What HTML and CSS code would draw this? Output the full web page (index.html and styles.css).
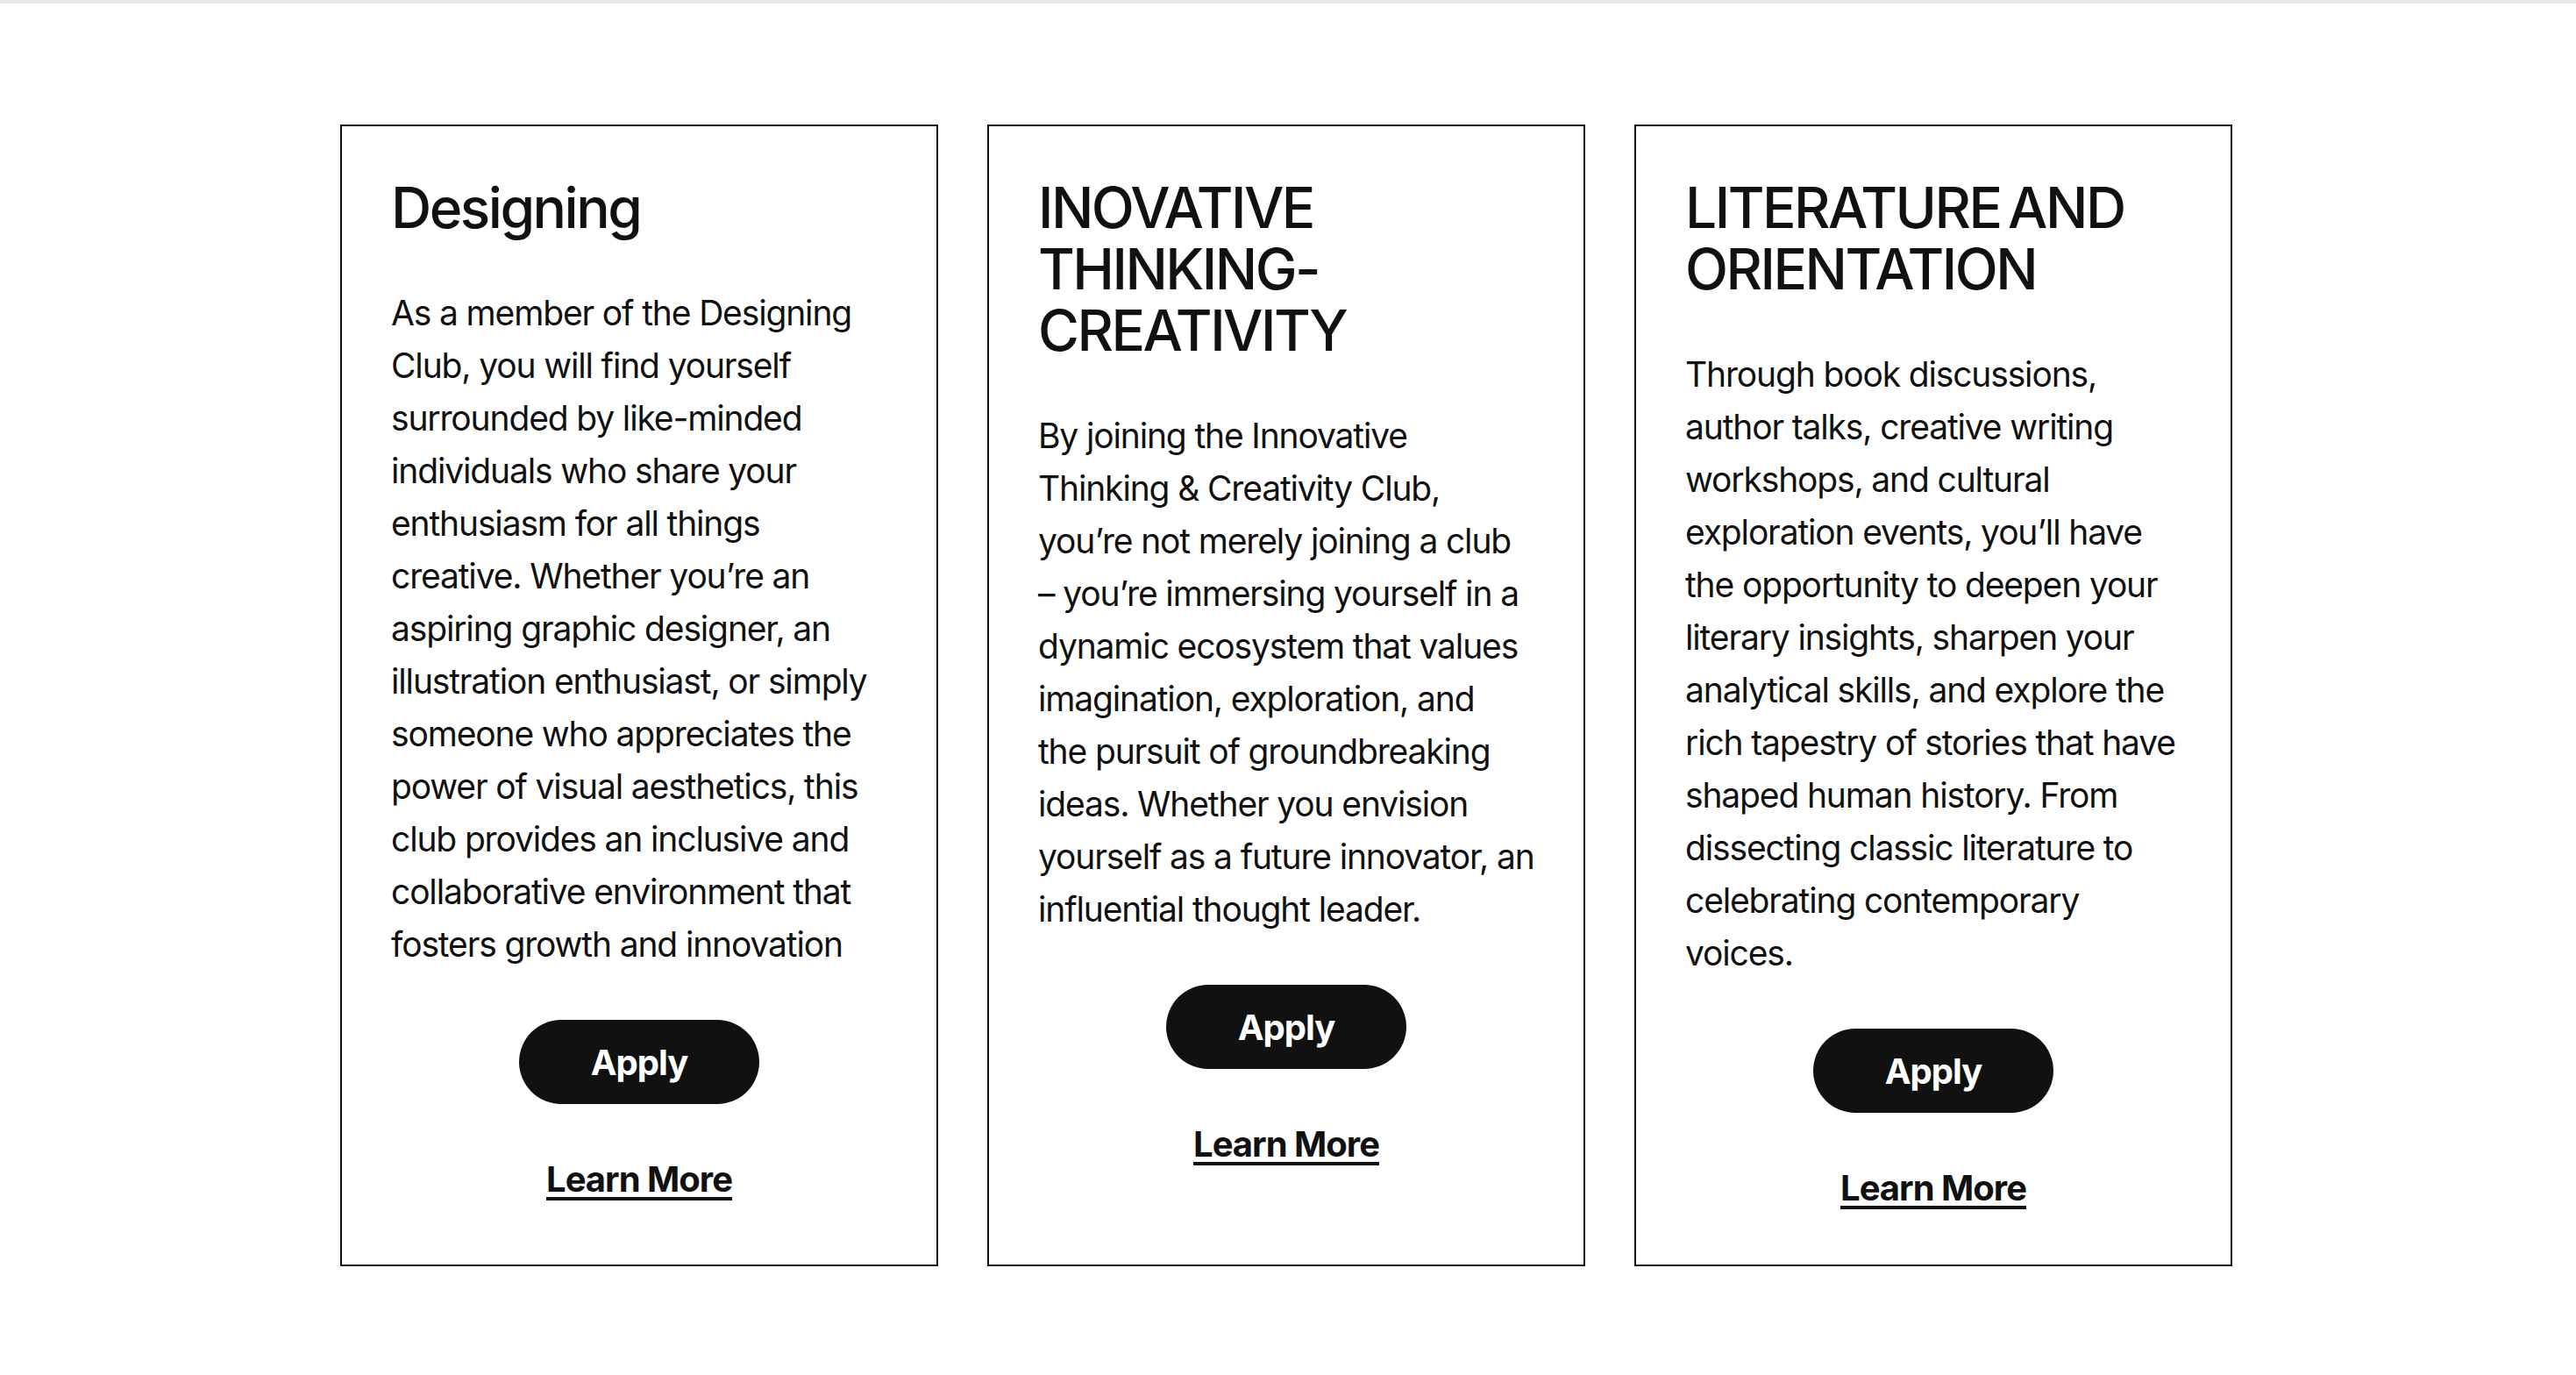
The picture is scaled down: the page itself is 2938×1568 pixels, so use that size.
FILE: index.html
```html
<!DOCTYPE html>
<html lang="en">
<head>
<meta charset="utf-8">
<title>Clubs</title>
<link rel="stylesheet" href="styles.css">
</head>
<body>
<div class="topbar"></div>
<main class="clubs">
  <article class="card">
    <h2 class="card-title">Designing</h2>
    <p class="card-text">As a member of the Designing Club, you will find yourself surrounded by like-minded individuals who share your enthusiasm for all things creative. Whether you’re an aspiring graphic designer, an illustration enthusiast, or simply someone who appreciates the power of visual aesthetics, this club provides an inclusive and collaborative environment that fosters growth and innovation</p>
    <a class="btn-apply" href="#">Apply</a>
    <a class="learn-more" href="#">Learn More</a>
  </article>
  <article class="card">
    <h2 class="card-title">INOVATIVE THINKING-CREATIVITY</h2>
    <p class="card-text">By joining the Innovative Thinking &amp; Creativity Club, you’re not merely joining a club – you’re immersing yourself in a dynamic ecosystem that values imagination, exploration, and the&nbsp;pursuit of groundbreaking ideas. Whether you envision yourself as a future innovator, an influential thought leader.</p>
    <a class="btn-apply" href="#">Apply</a>
    <a class="learn-more" href="#">Learn More</a>
  </article>
  <article class="card">
    <h2 class="card-title">LITERATURE AND ORIENTATION</h2>
    <p class="card-text">Through book discussions, author talks, creative writing workshops, and cultural exploration events, you’ll have the opportunity to deepen your literary insights, sharpen your analytical skills, and explore the rich tapestry of stories that have shaped human history. From dissecting classic literature to celebrating contemporary voices.</p>
    <a class="btn-apply" href="#">Apply</a>
    <a class="learn-more" href="#">Learn More</a>
  </article>
</main>
</body>
</html>
```
FILE: styles.css
```css
* { box-sizing: border-box; }
html, body { margin: 0; padding: 0; background: #fff; }
body {
  font-family: Inter, "Noto Sans", "Liberation Sans", sans-serif;
  color: #111;
}
.topbar {
  height: 4px;
  background: #e8e8e8;
}
.clubs {
  width: 2158px;
  margin: 138px 0 0 calc(50% - 1081px);
  display: grid;
  grid-template-columns: repeat(3, 1fr);
  gap: 56px;
  align-items: stretch;
}
.card {
  border: 2px solid #111;
  padding: 58px 56px 57px;
  display: flex;
  flex-direction: column;
  align-items: center;
}
.card-title {
  align-self: stretch;
  margin: 0 0 55px;
  font-size: 64px;
  line-height: 70px;
  font-weight: 500;
  letter-spacing: -2.5px;
  word-spacing: -6px;
}
.card-text {
  align-self: stretch;
  margin: 0;
  font-size: 39px;
  line-height: 60px;
  font-weight: 400;
  letter-spacing: -1.15px;
}
.btn-apply {
  margin-top: 56px;
  width: 274px;
  height: 96px;
  border-radius: 48px;
  background: #111;
  color: #fff;
  font-size: 40px;
  font-weight: 700;
  letter-spacing: -1px;
  text-decoration: none;
  display: flex;
  align-items: center;
  justify-content: center;
}
.learn-more {
  margin-top: 56px;
  font-size: 40px;
  line-height: 60px;
  font-weight: 700;
  color: #111;
  letter-spacing: -1px;
  text-decoration: underline;
  text-decoration-thickness: 4px;
  text-underline-offset: 6px;
}
```
